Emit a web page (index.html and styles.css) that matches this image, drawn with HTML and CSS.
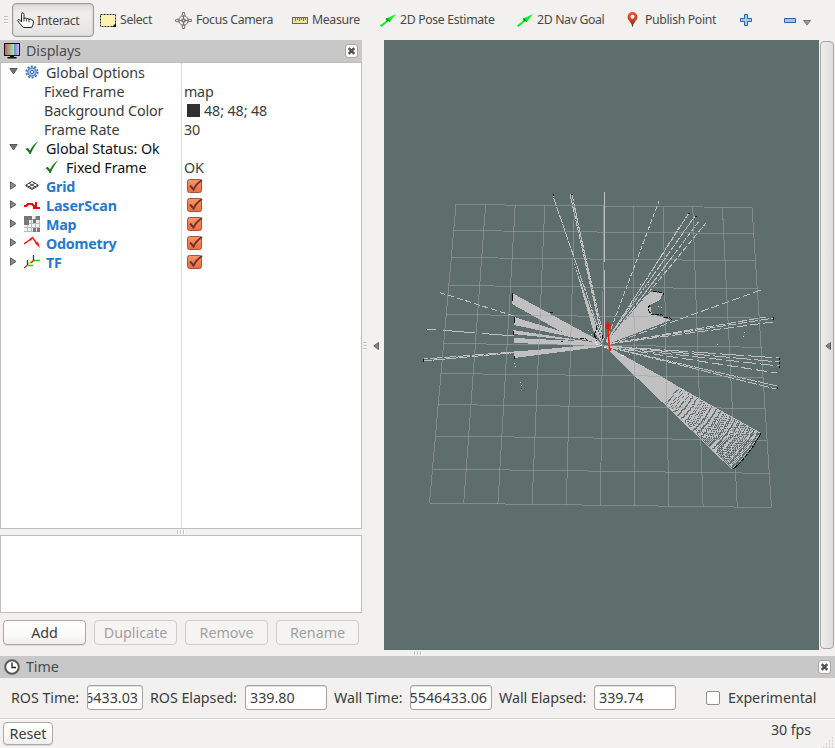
FILE: index.html
```html
<!DOCTYPE html>
<html lang="en">
<head>
<meta charset="utf-8">
<title>RViz</title>
<link rel="stylesheet" href="styles.css">
</head>
<body>
<svg class="defs" width="0" height="0" aria-hidden="true">
  <defs>
    <linearGradient id="pinFill" x1="0" y1="0" x2="0" y2="1"><stop offset="0" stop-color="#f0532c"/><stop offset=".5" stop-color="#d1431f"/><stop offset="1" stop-color="#3f2a12"/></linearGradient>
    <linearGradient id="boxFill" x1="0" y1="0" x2="0" y2="1"><stop offset="0" stop-color="#f8976f"/><stop offset="1" stop-color="#ef6a41"/></linearGradient>
  </defs>
  <symbol id="arrow" viewBox="0 0 16 13"><path d="M0 11.5 6.500 6.500 5.500 5 16 0 10 7.500 8.500 7 1.500 13z" fill="#00f31c"/><path d="M6 4.500 10 7.500M8 4.500l-1 3" stroke="#087a18" fill="none"/></symbol>
  <symbol id="check" viewBox="0 0 14 14"><path d="M.5 8 2.800 6.800 5 9.500C7 5.500 9.500 2.500 13.500 0 10 4 7.700 8 5.700 13H4.500Q3.500 10.500.5 8z" fill="#18761d"/></symbol>
  <symbol id="box" viewBox="0 0 16 16"><rect x=".5" y="1.500" width="14" height="13" rx="2" fill="url(#boxFill)" stroke="#a75537"/><path d="M3 7.500 6.500 11.500Q9 6 15 2" fill="none" stroke="#66372a" stroke-width="2"/></symbol>
  <symbol id="close" viewBox="0 0 13 14"><rect x=".5" y=".5" width="12" height="13" rx="2.500" fill="#fbfbfa" stroke="#aaa9a6"/><path d="m3.700 4.200 5.600 5.600m0-5.600-5.600 5.600" stroke="#555451" stroke-width="2.600"/></symbol>
  <symbol id="right" viewBox="0 0 7 9"><path d="M.5.8 6 4.500.5 8.200z" fill="#8b8a87" stroke="#5f5e5b"/></symbol>
  <symbol id="down" viewBox="0 0 9 7"><path d="M.8.5h7.400L4.500 6z" fill="#73726f" stroke="#5c5b58"/></symbol>
</svg>
<div class="window">
  <header class="toolbar">
    <i class="grip grip-v"></i>
    <button class="tool interact"><svg width="17" height="17" viewBox="0 0 17 17"><path d="M4.500 10V2.500Q4.500.8 5.700.8T7 2.500V7q0-1 1.200-1t1.300 1.500q0-1 1.300-1T12 8q0-1 1.200-1T14.500 8q2-.3 2 2-.2 3-1.800 5.500H6.500L1.500 10Q0 8 1.300 7.500 2.500 7 4.500 10z" fill="#fff" stroke="#222"/><path d="M7 7v2.500M9.500 7v2.500M12 8v2" stroke="#444"/></svg><span>Interact</span></button>
    <button class="tool select"><svg width="16" height="13"><rect x=".5" y=".5" width="15" height="12" fill="#fdf2af" stroke="#222" stroke-dasharray="2 1"/><path d="M16 9v4h-4z" fill="#111"/></svg><span>Select</span></button>
    <button class="tool focus"><svg width="17" height="17" viewBox="0 0 17 17" fill="none" stroke="#73726f"><circle cx="8.500" cy="8.500" r="4.700"/><circle cx="8.500" cy="8.500" r="1.500" stroke-width="1.500"/><path d="M7 4.500 7.500.5h2L10 4.500M7 12.500l.5 4h2l.5-4M4.500 7 .5 7.700v1.600l4 .7M12.500 7l4 .7v1.600l-4 .7M8.500 3.500V7M8.500 10v3.500M3.500 8.500H7M10 8.500h3.500"/></svg><span>Focus Camera</span></button>
    <button class="tool measure"><svg width="16" height="7"><rect x=".5" y=".5" width="15" height="6" fill="#eadf9c" stroke="#696865"/><path d="M3.500 1v3M5.500 1v2M7.500 1v3M9.500 1v2M11.500 1v3M13.500 1v2" stroke="#777258"/></svg><span>Measure</span></button>
    <button class="tool pose"><svg width="16" height="13"><use href="#arrow"/></svg><span>2D Pose Estimate</span></button>
    <button class="tool nav"><svg width="16" height="13"><use href="#arrow"/></svg><span>2D Nav Goal</span></button>
    <button class="tool publish"><svg width="11" height="16"><path d="M5.500 15.500Q4.500 11 2 8.500.5 7 .5 5A5 5 0 0 1 10.500 5Q10.500 7 9 8.500 6.500 11 5.500 15.500z" fill="url(#pinFill)"/><circle cx="5.500" cy="4.700" r="2" fill="#fff"/></svg><span>Publish Point</span></button>
    <svg class="plus" width="12" height="12"><path d="M4.500.5h3v4h4v3h-4v4h-3v-4h-4v-3h4z" fill="#a6c8ee" stroke="#2d62ad"/></svg>
    <svg class="minus" width="12" height="5"><path d="M.5.5h11v4H.5z" fill="#9fc3ea" stroke="#2d62ad"/></svg>
    <svg class="more" width="8" height="6"><path d="M.5.500h7L4 5z" fill="#999" stroke="#777"/></svg>
  </header>

  <main class="workspace">
    <section class="displays">
      <div class="dock-title"><svg width="16" height="16"><defs><linearGradient id="screen"><stop offset="0" stop-color="#c65a5a"/><stop offset=".33" stop-color="#c99a9a"/><stop offset=".34" stop-color="#77cc77"/><stop offset=".65" stop-color="#b3e8b0"/><stop offset=".66" stop-color="#7f7fdd"/><stop offset="1" stop-color="#cdc8f5"/></linearGradient></defs><rect x=".5" y=".5" width="15" height="12" fill="url(#screen)" stroke="#111"/><path d="M6 12.500h4V14h2.500v1.500h-9V14H6z" fill="#111"/></svg><span>Displays</span><svg class="close" width="13" height="14"><use href="#close"/></svg></div>
      <div class="tree">
        <div class="row"><div class="name"><svg class="twist" width="9" height="7"><use href="#down"/></svg><svg class="ico" width="16" height="14" viewBox="0 0 16 14"><circle cx="8" cy="7" r="5.600" fill="none" stroke="#3c70b4" stroke-width="1.800" stroke-dasharray="2 1.500"/><circle cx="8" cy="7" r="4.200" fill="#a1c1e8" stroke="#3c70b4"/><circle cx="8" cy="7" r="1.600" fill="#e7effa" stroke="#3c70b4"/></svg><span class="wide">Global Options</span></div><div class="value"></div></div>
        <div class="row"><div class="name sub"><span class="wide">Fixed Frame</span></div><div class="value">map</div></div>
        <div class="row"><div class="name sub"><span class="wide">Background Color</span></div><div class="value"><i class="swatch"></i><span class="wide">48; 48; 48</span></div></div>
        <div class="row"><div class="name sub"><span class="wide">Frame Rate</span></div><div class="value">30</div></div>
        <div class="row dark"><div class="name"><svg class="twist" width="9" height="7"><use href="#down"/></svg><svg class="ico" width="16" height="14"><use href="#check"/></svg><span class="wide">Global Status: Ok</span></div><div class="value"></div></div>
        <div class="row dark"><div class="name nested"><svg class="ico" width="16" height="14"><use href="#check"/></svg><span class="wide">Fixed Frame</span></div><div class="value light">OK</div></div>
        <div class="row link"><div class="name"><svg class="twist" width="7" height="9"><use href="#right"/></svg><svg class="ico" width="16" height="14"><path d="m2 6 6-3.500L14 6 8 9.500zM5 4.300l6 3.400m0-3.400-6 3.400M2 6v1l6 3.500L14 7V6" fill="none" stroke="#444"/></svg><span>Grid</span></div><div class="value"><svg width="16" height="16"><use href="#box"/></svg></div></div>
        <div class="row link"><div class="name"><svg class="twist" width="7" height="9"><use href="#right"/></svg><svg class="ico" width="16" height="14"><path d="M0 8h2l2-2h4l2 2v2h2V4v6h4" fill="none" stroke="#f00010" stroke-width="2" shape-rendering="crispEdges"/></svg><span class="scan">LaserScan</span></div><div class="value"><svg width="16" height="16"><use href="#box"/></svg></div></div>
        <div class="row link"><div class="name"><svg class="twist" width="7" height="9"><use href="#right"/></svg><svg class="ico" width="16" height="16"><path d="M0 0h16v16H0z" fill="#f1f1f1"/><path d="M3.500 0v16M7.500 0v16M11.500 0v16M0 3.500h16M0 7.500h16M0 11.500h16M15.500 0v16M0 15.500h16" stroke="#bbb"/><path d="M0 0h8v4H5v5H0zM12 0h4v4h-4zM9 12h3v4H9zM13 12h3v4h-3zM9 3h3v4H9z" fill="#777"/></svg><span>Map</span></div><div class="value"><svg width="16" height="16"><use href="#box"/></svg></div></div>
        <div class="row link"><div class="name"><svg class="twist" width="7" height="9"><use href="#right"/></svg><svg class="ico" width="16" height="14"><path d="m0 8 7-5M8 1l6 8" stroke="#ef1a12" stroke-width="1.500"/><path d="m5 3 4-2-2 4zM11 7l3-1 2 6z" fill="#ef1a12"/></svg><span>Odometry</span></div><div class="value"><svg width="16" height="16"><use href="#box"/></svg></div></div>
        <div class="row link"><div class="name"><svg class="twist" width="7" height="9"><use href="#right"/></svg><svg class="ico" width="16" height="14"><path d="m4 9 6-4" stroke="#efe51a" stroke-width="2"/><path d="M9.500 5V0M3.500 10V5" stroke="#2230dc" stroke-width="1.300"/><path d="M10 5.500h6M4 10.500h5" stroke="#0dd928" stroke-width="1.300"/><path d="m10 5-3 3M3.500 10 0 13" stroke="#e51414" stroke-width="1.300"/></svg><span>TF</span></div><div class="value"><svg width="16" height="16"><use href="#box"/></svg></div></div>
        <div class="row filler"><div class="name"></div><div class="value"></div></div>
      </div>
      <div class="splitter"><i class="grip grip-h"></i></div>
      <div class="description"></div>
      <div class="actions"><button class="btn">Add</button><button class="btn off">Duplicate</button><button class="btn off">Remove</button><button class="btn off">Rename</button></div>
    </section>
    <div class="collapse"><i class="grip grip-v"></i><svg width="6" height="8"><path d="M5.500.5v7L.8 4z" fill="#858481" stroke="#656461"/></svg></div>
    <svg class="view" width="435" height="610" viewBox="384 40 435 610">
      <g id="rays" fill="none" stroke="#c1c0c1" shape-rendering="crispEdges"></g>
      <g fill="#c1c0c1" shape-rendering="crispEdges">
        <path d="M512 293 598 340 602 345 560 331 512 304zM514 317 599 343 514 325zM513 330 598 343 513 334zM514 338 600 342V346L514 343zM514 352 600 344V347L514 358z"/>
        <path d="M574 263 598 331 603 345 593 330zM589 300 599 339 596 330z"/>
        <path d="M606 342 650 292 663 293 660 300 650 305 652 314 671 320 608 344zM605 345 668 380 634 374z"/>
      </g>
      <g id="grid" fill="none" stroke="#a0a4a1" stroke-opacity=".55" shape-rendering="crispEdges"></g>
      <g fill="none" stroke="#111" shape-rendering="crispEdges">
        <path d="M512 293v8M514 317v6M513 331v4M514 356v3M550 312l3 1M561 341h2M553 194v2M571 194h2M688 213h2M695 216h2M423 359v3M426 329v1M773 317v3M779 358v2M779 362v2M779 366v2M777 387v2"/>
        <path d="m653 292 4-1 2 1 4 1v2M650 305l-2 3 1 3 3 4 6-1 4 1 3 3 4-1 3 3M761 433l-4 7-5 8-6 8-7 8-6 5M596 326v5l-2 4 2 3v3M580 338l6 1 2 2M602 335v4" stroke-dasharray="4 1"/>
      </g>
      <path d="M588 330h1M591 334h1M595 342h2M596 344h2M600 345h2M604 347h2M514 363h1M515 366h1M520 382h1M521 385h1M621 355h3M629 354h1M717 344h1M744 332h1M743 336h1M658 306h1M661 307h1M640 284h1M648 284h1" stroke="#fff" shape-rendering="crispEdges"/>
      <path d="M608.500 326v10l1 14" fill="none" stroke="#fa1b00" stroke-width="1.600"/><path d="m607.500 321 3.500 5-1 3h-4l-1-3z" fill="#df1f0b"/><path d="M609 348h2v3h-2z" fill="#fa1b00"/>
    </svg>
    <aside class="right-dock"><div class="handle"><svg width="6" height="8"><path d="M5.500.5v7L.8 4z" fill="#858481" stroke="#656461"/></svg></div></aside>
  </main>

  <div class="splitter"><i class="grip grip-h"></i></div>
  <section class="time">
    <div class="dock-title"><svg width="16" height="16"><circle cx="8" cy="8" r="6.800" fill="#fff" stroke="#595959" stroke-width="2"/><path d="M8 3.500V8.500h4" fill="none" stroke="#222" stroke-width="1.300"/></svg><span>Time</span><svg class="close" width="13" height="14"><use href="#close"/></svg></div>
    <div class="fields">
      <label class="l1">ROS Time:</label><div class="input i1"><span>6433.03</span></div>
      <label class="l2">ROS Elapsed:</label><div class="input i2"><span>339.80</span></div>
      <label class="l3">Wall Time:</label><div class="input i3"><span>5546433.06</span></div>
      <label class="l4">Wall Elapsed:</label><div class="input i4"><span>339.74</span></div>
      <i class="checkbox"></i><label class="l5">Experimental</label>
    </div>
  </section>
  <footer class="statusbar"><button class="btn reset">Reset</button><span class="fps">30 fps</span><svg class="sizer" width="11" height="11"><path d="M9 1h1M6 4h1M9 4h1M3 7h1M6 7h1M9 7h1M0 10h1M3 10h1M6 10h1M9 10h1" stroke="#b9b8b5"/></svg></footer>
</div>
<script src="scene.js"></script>
</body>
</html>
```
FILE: styles.css
```css
* { box-sizing: border-box; }
body { margin: 0; background: #f2f1f0; color: #3c3c3c; font: 14.3px/19px "Noto Sans", sans-serif; letter-spacing: -.25px; }
svg { display: block; flex: none; }
button { font: inherit; letter-spacing: inherit; color: inherit; margin: 0; }
.defs { position: absolute; }
.window { width: 835px; height: 748px; display: flex; flex-direction: column; overflow: hidden; }
span, label { white-space: nowrap; }

.toolbar { height: 40px; flex: none; display: flex; align-items: center; padding-left: 4px; font-size: 12.3px; letter-spacing: -.36px; color: #4a4947; }
.grip { display: block; flex: none; }
.grip-v { width: 4px; height: 8px; background: repeating-linear-gradient(#c3c2bf 0 1px, #fff 1px 2px, transparent 2px 3px); }
.grip-h { width: 8px; height: 4px; background: repeating-linear-gradient(90deg, #c3c2bf 0 1px, #fff 1px 2px, transparent 2px 3px); }
.tool { display: flex; flex: none; align-items: center; height: 34px; padding: 0; border: 0; background: none; }
.tool span { margin-top: -1px; }
.tool.interact { width: 82px; margin-left: 4px; padding-left: 4px; gap: 3px; border: 1px solid #9c9b98; border-radius: 4px; background: linear-gradient(#dfdedc, #efeeec 30%, #e5e4e2); box-shadow: inset 0 0 2px #aaa; }
.interact span { margin-top: 1px; }
.select { width: 75px; margin-left: 6px; gap: 4px; }
.focus { width: 117px; gap: 4px; }
.measure { width: 88px; gap: 4px; }
.pose { width: 137px; gap: 4px; }
.nav { width: 110px; gap: 4px; }
.publish { width: 113px; gap: 7px; }
.minus { margin-left: 32px; }
.more { margin: 6px 0 0 7px; }

.workspace { height: 610px; flex: none; display: flex; }
.displays { width: 362px; display: flex; flex-direction: column; }
.dock-title { height: 22px; flex: none; display: flex; align-items: center; gap: 6px; padding: 0 4px; background: #c8c8c8; color: #4c4c4c; letter-spacing: -.1px; }
.dock-title span { margin-top: -2px; }
.close { margin-left: auto; }
.tree { height: 467px; flex: none; display: flex; flex-direction: column; border: 1px solid #bebdba; background: #fff; }
.row { height: 19px; display: flex; align-items: center; }
.row.filler { flex: 1; align-items: stretch; }
.name { width: 181px; height: 100%; display: flex; align-items: center; padding-left: 7px; border-right: 1px solid #d9d8d6; }
.name.sub { padding-left: 43px; }
.name.nested { padding-left: 43px; }
.name.nested .ico { margin: -1px 6px 0 0; }
.wide { letter-spacing: -.1px; }
.value { display: flex; align-items: center; padding-left: 2px; }
.value svg { margin: -2px 0 0 3px; }
.twist { margin: -2px 0 0 1px; width: 9px; }
.ico { margin: -1px 6px 0 6px; }
.dark { color: #111; }
.light { color: #3c3c3c; }
.link { color: #2878c8; font-weight: 700; }
.scan { letter-spacing: -.1px; }
.swatch { width: 13px; height: 13px; margin: 0 4px 0 3px; background: #303030; }
.splitter { height: 6px; flex: none; display: flex; justify-content: center; align-items: center; }
.description { height: 78px; flex: none; background: #fff; border: 1px solid #bebdba; }
.actions { display: flex; gap: 8px; padding: 7px 3px; }
.btn { width: 83px; height: 25px; padding: 0; border: 1px solid #aaa9a6; border-radius: 4px; background: linear-gradient(#fff, #fafaf9 60%, #efeeed); letter-spacing: 0; box-shadow: 0 1px 0 #dad9d7; }
.btn.off { color: #a1a09e; border-color: #cecdca; background: #f5f4f3; box-shadow: none; }

.collapse { width: 22px; display: flex; align-items: center; gap: 6px; padding: 2px 0 0 1px; }
.view { background: #5e6e6c; }
.right-dock { width: 16px; padding: 1px 0 1px 1px; }
.handle { width: 14px; height: 608px; display: flex; align-items: center; justify-content: center; padding: 2px 0 0 2px; border: 1px solid #aaa6a1; border-radius: 4px; background: linear-gradient(90deg, #efeeed, #dfdedc); }

.time { height: 63px; flex: none; border-bottom: 1px solid #d3d2d0; }
.fields { height: 39px; display: flex; align-items: center; padding-left: 11px; letter-spacing: -.06px; }
.fields label { flex: none; }
.l1 { width: 76px; } .l2 { width: 95px; } .l3 { width: 76px; } .l4 { width: 95px; }
.input { flex: none; height: 25px; display: flex; align-items: center; padding: 0 4px; border: 1px solid #a5a4a1; border-radius: 3px; background: #fff; overflow: hidden; letter-spacing: 0; box-shadow: inset 0 1px 1px #ddd; }
.i1 { width: 56px; margin-right: 7px; justify-content: flex-end; }
.i2 { width: 82px; margin-right: 7px; }
.i3 { width: 82px; margin-right: 7px; justify-content: flex-end; }
.i4 { width: 82px; }
.checkbox { flex: none; width: 14px; height: 14px; margin: 0 8px 0 30px; border: 1px solid #8f8e8b; border-radius: 2px; background: #fff; }
.statusbar { height: 29px; flex: none; display: flex; align-items: flex-start; padding: 2px 1px 0 3px; border-top: 1px solid #fff; }
.reset { width: 50px; height: 23px; line-height: 20px; }
.fps { margin: -2px 12px 0 auto; letter-spacing: -.1px; }
.sizer { align-self: flex-end; }
```
FILE: scene.js
```js
const NS = "http://www.w3.org/2000/svg";
function add(parent, d, attrs = {}) {
  const p = document.createElementNS(NS, "path");
  p.setAttribute("d", d);
  for (const k in attrs) p.setAttribute(k, attrs[k]);
  document.getElementById(parent).appendChild(p);
}

// Perspective ground grid, 10 x 10 cells
const rows = [204.5, 230.5, 257.5, 285.5, 314.5, 343.5, 373.5, 404.5, 436, 469, 503];
rows.forEach((y, i) => {
  const t = (y - 204.5) / 298.5;
  add("grid", `M${456 - 27 * t} ${y}L${752 + 19.5 * t} ${y + 3 + i * 0.15}`);
});
for (let i = 0; i <= 10; i++) {
  add("grid", `M${456 + 29.6 * i} ${204.5 + 0.3 * i}L${429.5 + 34.2 * i} ${503 + 0.45 * i}`);
}

// Dense scan fan towards the lower right; far ends thin out into a dotted texture
for (let i = 0; i <= 30; i++) {
  const t = i / 30;
  const ex = 760 - 28 * t + 3 * Math.sin(Math.PI * t);
  const ey = 433 + 36 * t;
  const at = (k) => `${605 + (ex - 605) * k} ${346 + (ey - 346) * k}`;
  add("rays", `M${at(0)}L${at(0.45)}`, { "stroke-width": 1.5 });
  const dash = i === 0 || i === 30 ? "none" : i % 2 ? "4 1.4" : "3 1.4";
  add("rays", `M${at(0.45)}L${at(1)}`, { "stroke-dasharray": dash });
}

// Single range beams: start x/y, end x/y, dash pattern
[
  [603, 342, 553, 196, "8 1"], [603, 342, 570, 194, "6 1"], [603, 342, 572, 194, "7 1"], [602, 330, 574, 205, "5 1"],
  [604, 340, 605, 190, "70 8"],
  [606, 342, 659, 201, "5 2"], [606, 342, 689, 213, "6 1"], [606, 342, 695, 216, "7 1"],
  [607, 343, 700, 220, "5 2"], [607, 343, 706, 223, "6 2"], [607, 342, 680, 226, "4 2"], [607, 343, 673, 256, "5 1"],
  [514, 316, 438, 292, "6 3"], [514, 336, 427, 329, "32 7"],
  [600, 345, 423, 361, "12 1"], [540, 350, 424, 359, "12 2"],
  [608, 345, 761, 290, "8 3"], [608, 344, 766, 317, "9 2"], [608, 344, 774, 318, "9 2"], [608, 344, 773, 322, "10 3"],
  [608, 346, 779, 358, "24 4"], [608, 346, 779, 362, "18 3"], [608, 347, 779, 366, "13 4"],
  [608, 347, 777, 373, "11 4"], [608, 347, 777, 386, "10 1"], [608, 347, 776, 389, "10 2"]
].forEach(([a, b, c, d, dash]) => add("rays", `M${a} ${b}L${c} ${d}`, { "stroke-dasharray": dash }));
```
